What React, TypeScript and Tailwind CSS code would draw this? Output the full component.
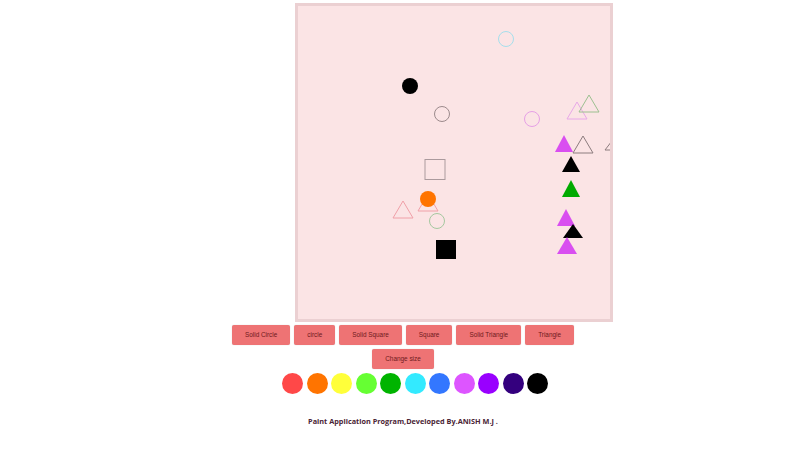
const BUTTONS = [
  "Solid Circle",
  "circle",
  "Solid Square",
  "Square",
  "Solid Triangle",
  "Triangle",
];

const COLORS = [
  "#ff4848",
  "#ff7400",
  "#ffff3a",
  "#66ff33",
  "#00b400",
  "#33eaff",
  "#3377ff",
  "#dd55ff",
  "#9900ff",
  "#34007e",
  "#000000",
];

// triangle points: apex x, apex y, half base, height
const tri = (x: number, y: number, w = 10, h = 17) =>
  `${x},${y} ${x - w},${y + h} ${x + w},${y + h}`;

function Drawing() {
  return (
    <svg className="block h-full w-full" viewBox="298 6 312 313">
      <circle cx="506" cy="39" r="7.5" fill="none" stroke="#a6dfec" strokeWidth="1" />
      <circle cx="410" cy="86" r="8" fill="#000" />
      <circle cx="442" cy="114" r="7.5" fill="none" stroke="#9c8a8c" strokeWidth="1" />
      <circle cx="532" cy="119" r="7.5" fill="none" stroke="#e6a0e6" strokeWidth="1" />
      <polygon points={tri(577, 102)} fill="none" stroke="#e8a8e8" strokeWidth="1" />
      <polygon points={tri(589, 95, 10, 17)} fill="none" stroke="#9cc090" strokeWidth="1" />
      <polygon points={tri(564, 135, 9, 17)} fill="#d94ef0" />
      <polygon points={tri(583, 136, 10, 17)} fill="none" stroke="#8c7c7e" strokeWidth="1" />
      <polygon points={tri(615, 137, 10, 13)} fill="none" stroke="#8c7c7e" strokeWidth="1" />
      <polygon points={tri(571, 156, 9, 16)} fill="#000" />
      <polygon points={tri(571, 180, 9, 17)} fill="#00aa00" />
      <polygon points={tri(566, 209, 9, 17)} fill="#d94ef0" />
      <polygon points={tri(573, 224, 10, 14)} fill="#000" />
      <polygon points={tri(567, 237, 10, 17)} fill="#d94ef0" />
      <rect x="425" y="159.5" width="20" height="20" fill="none" stroke="#ab9a9d" strokeWidth="1" />
      <polygon points={tri(428, 194, 10, 17)} fill="none" stroke="#f0a0a8" strokeWidth="1" />
      <polygon points={tri(403, 201, 10, 17)} fill="none" stroke="#f0a0a8" strokeWidth="1" />
      <circle cx="428" cy="199" r="8" fill="#ff7400" />
      <circle cx="437" cy="221" r="7.5" fill="none" stroke="#a6c8a0" strokeWidth="1" />
      <rect x="436" y="240" width="20" height="19" fill="#000" />
    </svg>
  );
}

export default function App() {
  return (
    <div className="min-h-[453px] w-full bg-white font-['Liberation_Sans',Arial,sans-serif]">
      <div className="ml-[295px] pt-[3px]">
        <div className="h-[319px] w-[318px] border-[3px] border-[#ebd0d2] bg-[#fbe4e5] overflow-hidden">
          <Drawing />
        </div>
      </div>

      <div className="mt-[3px] flex justify-center gap-1">
        {BUTTONS.map((label) => (
          <button
            key={label}
            className="h-5 rounded-[2px] bg-[#ee7374] px-[13px] text-[6.4px] leading-5 text-[#6e1a1c] shadow-[0_0_1px_rgba(0,0,0,0.25)]"
          >
            {label}
          </button>
        ))}
      </div>

      <div className="mt-1 flex justify-center">
        <button className="h-5 rounded-[2px] bg-[#ee7374] px-[13px] text-[6.4px] leading-5 text-[#6e1a1c] shadow-[0_0_1px_rgba(0,0,0,0.25)]">
          Change size
        </button>
      </div>

      <div className="ml-[282px] mt-1 flex gap-[3.5px]">
        {COLORS.map((c) => (
          <span
            key={c}
            className="block h-[21px] w-[21px] rounded-full"
            style={{ backgroundColor: c }}
          />
        ))}
      </div>

      <p className="mt-[22px] text-center font-['Open_Sans',sans-serif] text-[7.3px] font-bold text-[#4a2435]">
        Paint Application Program,Developed By.ANISH M.J .
      </p>
    </div>
  );
}
